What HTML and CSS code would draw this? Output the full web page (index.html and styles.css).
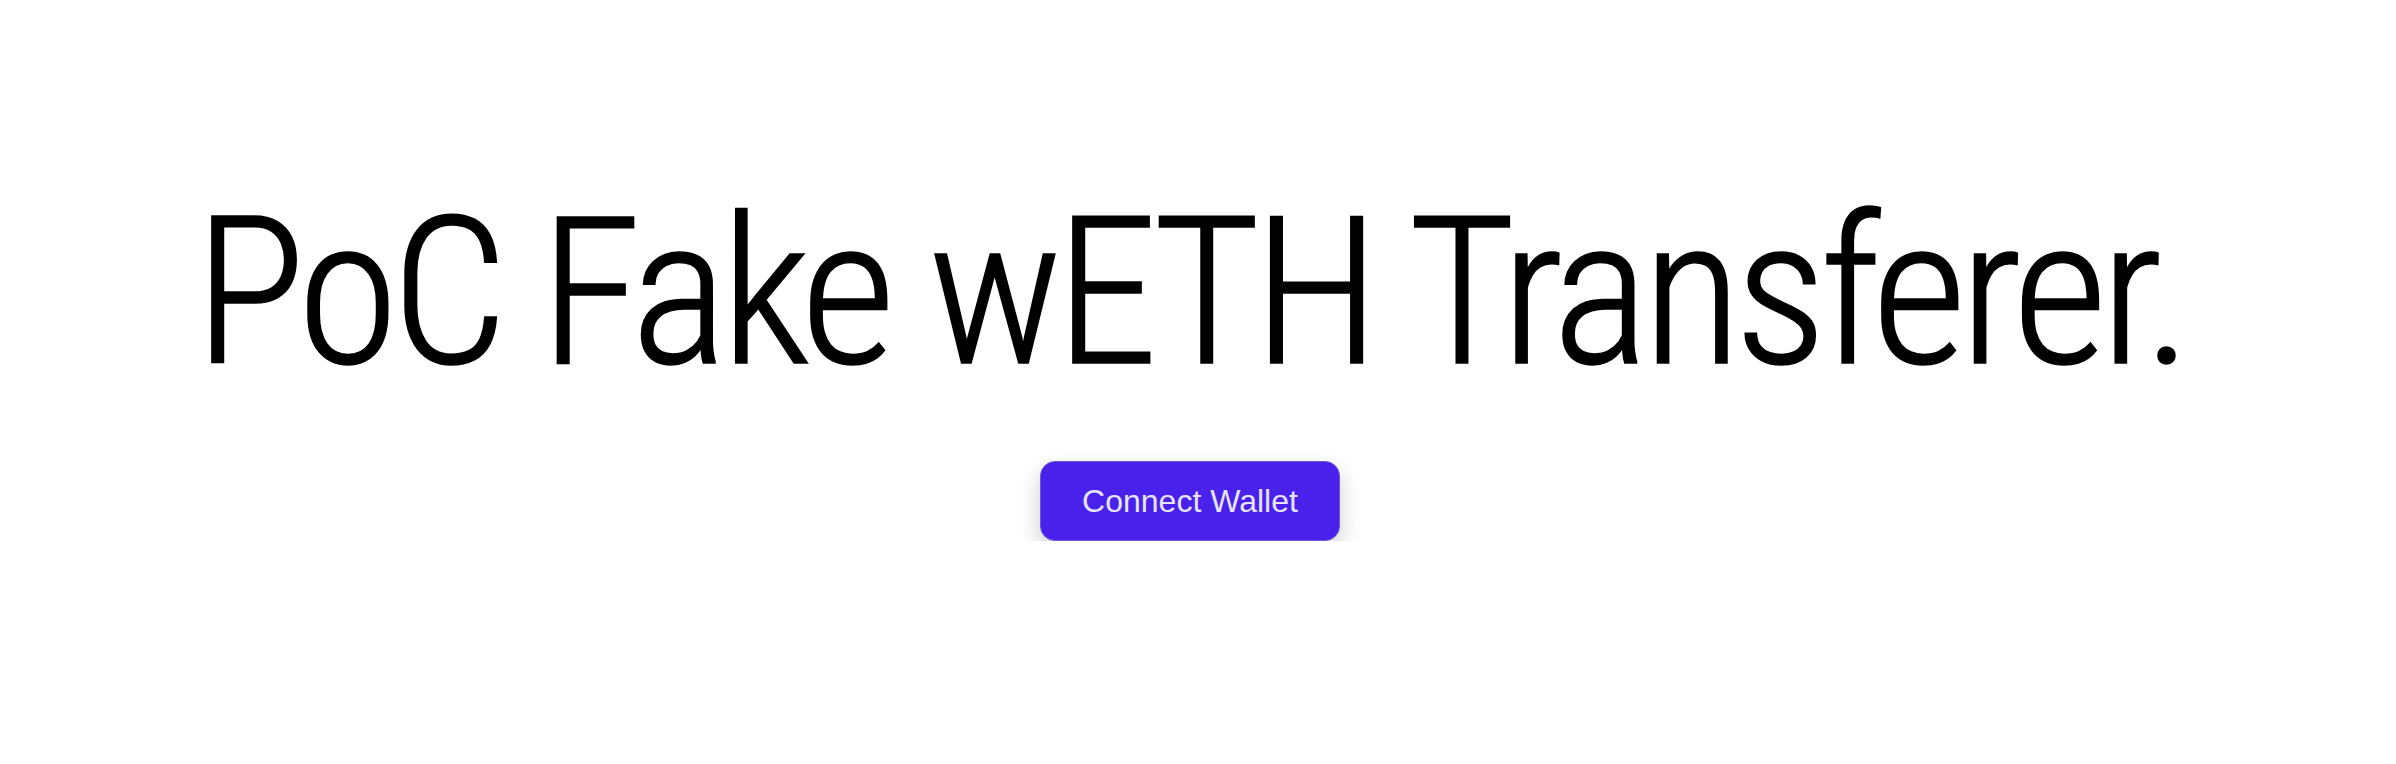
FILE: index.html
```html
<!DOCTYPE html>
<html>
<head>
<meta charset="utf-8">
<title>PoC Fake wETH Transferer</title>
<link rel="stylesheet" href="styles.css">
</head>
<body>
<main class="page">
  <h1 class="title">PoC Fake wETH Transferer.</h1>
  <button class="connect-btn" type="button">Connect Wallet</button>
</main>
</body>
</html>
```
FILE: styles.css
```css
html, body {
  margin: 0;
  padding: 0;
  background: #ffffff;
}

.page {
  display: flex;
  flex-direction: column;
  align-items: center;
  padding: 190px 16px 0 0;
  gap: 65px;
}

.title {
  margin: 0;
  font-family: "Roboto Condensed", "Roboto", sans-serif;
  font-weight: 300;
  font-size: 206px;
  line-height: 206px;
  letter-spacing: -7px;
  color: #000000;
  white-space: nowrap;
  -webkit-text-stroke: 1.5px #000000;
}

.connect-btn {
  font-family: "Liberation Sans", Arial, sans-serif;
  font-size: 32px;
  line-height: 38px;
  color: #e6e4ff;
  background: #4a21ea;
  border: 1px solid #6a58d6;
  border-radius: 15px;
  padding: 20px 41px;
  box-shadow: 0 10px 22px rgba(0, 0, 0, 0.2);
  cursor: pointer;
}
```
